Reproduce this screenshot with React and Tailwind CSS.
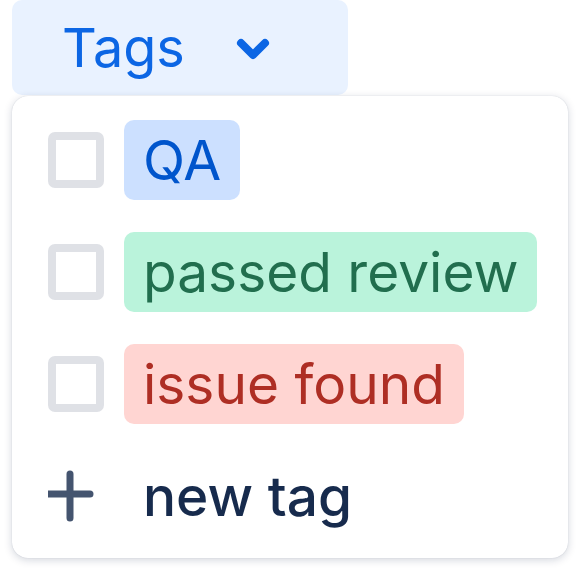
export default function App() {
  const tags = [
    { label: "QA", bg: "bg-[#cce0ff]", fg: "text-[#0055cc]" },
    { label: "passed review", bg: "bg-[#baf3db]", fg: "text-[#216e4e]" },
    { label: "issue found", bg: "bg-[#ffd5d2]", fg: "text-[#ae2e24]" },
  ];

  return (
    <div className="min-h-screen bg-white pl-3" style={{ fontFamily: "Inter, 'Noto Sans', sans-serif" }}>
      <button className="flex h-[95px] w-[336px] items-center rounded-[10px] bg-[#e9f2ff] pl-[50px] text-[#0c66e4]">
        <span className="text-[54px] leading-none">Tags</span>
        <svg className="ml-[51px] mt-[4px]" width="34" height="24" viewBox="0 0 34 24" fill="none">
          <path d="M5 5l12 12L29 5" stroke="currentColor" strokeWidth="8" strokeLinecap="round" strokeLinejoin="round" />
        </svg>
      </button>

      <div className="mt-[1px] w-[556px] rounded-2xl bg-white px-9 pb-[22px] pt-6 shadow-[0_2px_8px_rgba(9,30,66,0.18),0_0_1px_rgba(9,30,66,0.2)]">
        <div className="flex flex-col gap-8">
          {tags.map((t) => (
            <div key={t.label} className="flex h-20 items-center gap-5">
              <div className="h-14 w-14 shrink-0 rounded-[7px] border-[8px] border-[#dfe1e6] bg-white" />
              <span className={`flex h-20 items-center whitespace-nowrap rounded-[10px] px-[19px] text-[55px] leading-none ${t.bg} ${t.fg}`}>
                {t.label}
              </span>
            </div>
          ))}
          <div className="flex h-20 items-center">
            <svg className="w-[56px] shrink-0" width="56" height="56" viewBox="0 0 56 56" fill="none">
              <path d="M22 4v44M0 24h42" stroke="#44546f" strokeWidth="7" strokeLinecap="round" transform="translate(0 2)" />
            </svg>
            <span className="ml-[39px] whitespace-nowrap text-[55px] font-medium leading-none text-[#172b4d]">new tag</span>
          </div>
        </div>
      </div>
    </div>
  );
}
